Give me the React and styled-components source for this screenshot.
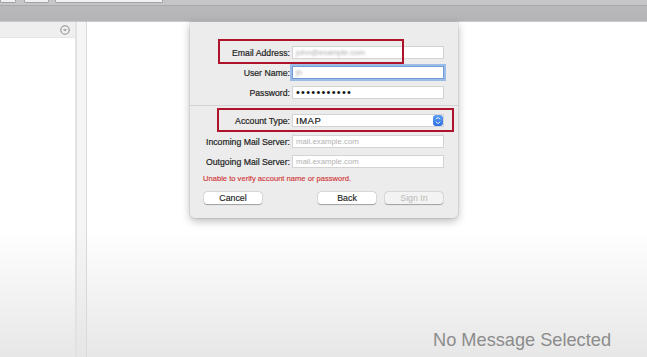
import styled, { createGlobalStyle } from "styled-components";

const GlobalStyle = createGlobalStyle`
  html, body { margin: 0; padding: 0; }
  body {
    width: 647px;
    height: 357px;
    overflow: hidden;
    background: #fff;
    font-family: "Liberation Sans", Arial, sans-serif;
  }
`;

const Window = styled.div`
  width: 647px;
  height: 357px;
  display: flex;
  flex-direction: column;
`;

const Toolbar = styled.header`
  height: 22px;
  flex: none;
  display: flex;
  flex-direction: column;
  background: linear-gradient(#bbbbbd, #b4b4b6);
  border-bottom: 1px solid #c9c9c9;
  box-sizing: border-box;
`;

const ToolStrip = styled.div`
  height: 6px;
  display: flex;
  align-items: flex-start;
  background: #c6c6c8;
  border-bottom: 1px solid #a9a9ab;
  box-sizing: border-box;
`;

const ToolSlot = styled.div`
  width: ${(p) => p.$w}px;
  margin-left: ${(p) => p.$gap}px;
  height: 3px;
  background: #f1f1f1;
  border: 1px solid #a2a2a2;
  border-top: none;
  border-radius: 0 0 2px 2px;
  box-sizing: border-box;
`;

const Body = styled.div`
  flex: 1;
  display: flex;
  min-height: 0;
`;

const fade = `linear-gradient(to bottom, #ffffff 0%, #ffffff 62%, #e7e7e7 100%)`;

const Sidebar = styled.aside`
  width: 75px;
  flex: none;
  display: flex;
  flex-direction: column;
  background: ${fade};
  border-right: 2px solid #e2e2e2;
`;

const SidebarHeader = styled.div`
  height: 15px;
  display: flex;
  align-items: center;
  justify-content: flex-end;
  padding-right: 5px;
  background: #efefef;
  border-bottom: 1px solid #e6e6e6;
`;

const Strip = styled.div`
  width: 9px;
  flex: none;
  background: linear-gradient(to bottom, #f5f5f5 0%, #f5f5f5 62%, #e6e6e6 100%);
  border-right: 1px solid #d9d9d9;
`;

const Main = styled.main`
  flex: 1;
  position: relative;
  display: flex;
  flex-direction: column;
  justify-content: flex-end;
  align-items: flex-end;
  padding: 0 36px 6px 0;
  background: ${fade};
`;

const EmptyText = styled.div`
  font-size: 18.2px;
  line-height: 22px;
  color: #8c8c8c;
`;

const Sheet = styled.div`
  position: absolute;
  left: 103px;
  top: 0;
  width: 268px;
  height: 196px;
  background: #ececec;
  border-radius: 0 0 5px 5px;
  box-shadow: 0 3px 9px rgba(0, 0, 0, 0.28), 0 0 0 1px rgba(0, 0, 0, 0.06);
  display: flex;
  flex-direction: column;
  padding-top: 24px;
  box-sizing: border-box;
`;

const Row = styled.div`
  display: grid;
  grid-template-columns: 100px 152px;
  column-gap: 2px;
  align-items: center;
  height: 13px;
  margin-top: ${(p) => p.$mt || 0}px;
`;

const Label = styled.label`
  font-size: 8.7px;
  color: #1f1f1f;
  text-align: right;
  white-space: nowrap;
  -webkit-text-stroke: 0.2px #1f1f1f;
`;

const Field = styled.div`
  height: 13px;
  box-sizing: border-box;
  background: #fff;
  border: 1px solid ${(p) => (p.$focus ? "#6f9bd6" : "#d3d3d3")};
  box-shadow: ${(p) => (p.$focus ? "0 0 0 2px #9dbde9" : "none")};
  padding-left: 3px;
  display: flex;
  align-items: center;
  font-size: 7.8px;
  color: ${(p) => (p.$muted ? "#b2b2b2" : "#222")};
  overflow: hidden;
  white-space: nowrap;
`;

const Blurred = styled.span`
  filter: blur(0.8px);
  color: #a9a9a9;
`;

const Dots = styled.span`
  font-size: 11px;
  letter-spacing: 1.25px;
  color: #111;
  line-height: 11px;
`;

const PopupValue = styled.span`
  flex: 1;
  font-size: 9.5px;
  letter-spacing: 0.5px;
  color: #222;
  -webkit-text-stroke: 0.2px #222;
`;

const Stepper = styled.div`
  width: 10px;
  height: 11px;
  border-radius: 3px;
  background: linear-gradient(#5d9ff6, #2e6ee0);
  display: flex;
  align-items: center;
  justify-content: center;
`;

const Separator = styled.div`
  height: 1px;
  background: #d4d4d4;
  margin-top: 6px;
`;

const ErrorText = styled.div`
  margin: 6px 0 0 13px;
  font-size: 7.6px;
  line-height: 10px;
  color: #d2373a;
  -webkit-text-stroke: 0.15px #d2373a;
`;

const Buttons = styled.div`
  display: flex;
  margin-top: 8px;
  padding: 0 15px 0 14px;
  gap: 9px;
`;

const Button = styled.button`
  width: 58px;
  height: 12px;
  padding: 0;
  border: none;
  border-radius: 3px;
  font-family: inherit;
  font-size: 8.8px;
  line-height: 12px;
  text-align: center;
  background: ${(p) => (p.disabled ? "#f3f3f3" : "#fff")};
  color: ${(p) => (p.disabled ? "#b8b8b8" : "#222")};
  -webkit-text-stroke: ${(p) => (p.disabled ? "0" : "0.15px #222")};
  box-shadow: 0 0.5px 1px rgba(0, 0, 0, 0.28), 0 0 0 0.5px rgba(0, 0, 0, 0.12);
  margin-left: ${(p) => (p.$push ? "auto" : "0")};
`;

const Highlight = styled.div`
  position: absolute;
  left: ${(p) => p.$x}px;
  top: ${(p) => p.$y}px;
  width: ${(p) => p.$w}px;
  height: ${(p) => p.$h}px;
  border: 2px solid #ad1429;
  box-sizing: border-box;
  pointer-events: none;
`;

const CircleChevron = () => (
  <svg width="10" height="10" viewBox="0 0 10 10">
    <circle cx="5" cy="5" r="4.2" fill="none" stroke="#8f8f8f" strokeWidth="1.1" />
    <path d="M3 4.2 L5 6.3 L7 4.2 Z" fill="#8f8f8f" />
  </svg>
);

const UpDown = () => (
  <svg width="6" height="9" viewBox="0 0 6 9">
    <path d="M1 3.3 L3 1.3 L5 3.3" fill="none" stroke="#fff" strokeWidth="1" />
    <path d="M1 5.7 L3 7.7 L5 5.7" fill="none" stroke="#fff" strokeWidth="1" />
  </svg>
);

const App = () => {
  return (
    <Window>
      <GlobalStyle />
      <Toolbar>
        <ToolStrip>
          <ToolSlot $w={16} $gap={0} />
          <ToolSlot $w={25} $gap={8} />
          <ToolSlot $w={108} $gap={6} />
        </ToolStrip>
      </Toolbar>
      <Body>
        <Sidebar>
          <SidebarHeader>
            <CircleChevron />
          </SidebarHeader>
        </Sidebar>
        <Strip />
        <Main>
          <EmptyText>No Message Selected</EmptyText>
          <Sheet>
            <Row>
              <Label>Email Address:</Label>
              <Field>
                <Blurred>john@example.com</Blurred>
              </Field>
            </Row>
            <Row $mt={7}>
              <Label>User Name:</Label>
              <Field $focus>
                <Blurred>jb</Blurred>
              </Field>
            </Row>
            <Row $mt={7}>
              <Label>Password:</Label>
              <Field>
                <Dots>•••••••••••</Dots>
              </Field>
            </Row>
            <Separator />
            <Row $mt={8}>
              <Label>Account Type:</Label>
              <Field>
                <PopupValue>IMAP</PopupValue>
                <Stepper>
                  <UpDown />
                </Stepper>
              </Field>
            </Row>
            <Row $mt={8}>
              <Label>Incoming Mail Server:</Label>
              <Field $muted>mail.example.com</Field>
            </Row>
            <Row $mt={7}>
              <Label>Outgoing Mail Server:</Label>
              <Field $muted>mail.example.com</Field>
            </Row>
            <ErrorText>Unable to verify account name or password.</ErrorText>
            <Buttons>
              <Button>Cancel</Button>
              <Button $push>Back</Button>
              <Button disabled>Sign In</Button>
            </Buttons>
            <Highlight $x={28} $y={17} $w={186} $h={25} />
            <Highlight $x={27} $y={86} $w={237} $h={24} />
          </Sheet>
        </Main>
      </Body>
    </Window>
  );
};

export default App;
